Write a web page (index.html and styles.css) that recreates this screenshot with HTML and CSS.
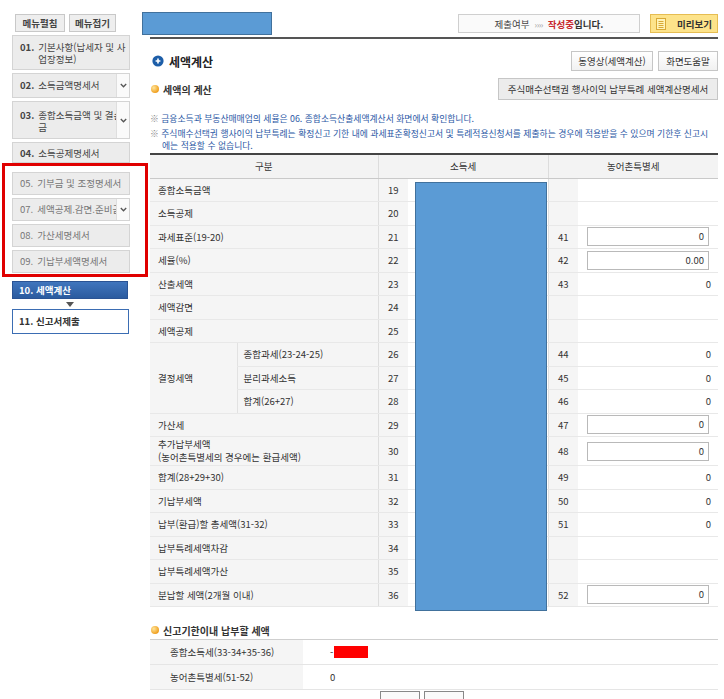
FILE: index.html
```html
<!DOCTYPE html>
<html lang="ko">
<head>
<meta charset="utf-8">
<title>세액계산</title>
<link rel="stylesheet" href="styles.css">
</head>
<body>
<div class="page">
  <aside class="sidebar">
    <div class="side-btns">
      <span class="side-btn w50">메뉴펼침</span>
      <span class="side-btn w47">메뉴접기</span>
    </div>
    <ul class="menu">
      <li class="item two"><b class="num">01.</b><span class="txt">기본사항(납세자 및 사업장정보)</span></li>
      <li class="item one has-chev"><b class="num">02.</b><span class="txt">소득금액명세서</span><span class="chev"><svg width="7" height="5" viewBox="0 0 7 5"><path d="M0.8 1 L3.5 3.8 L6.2 1" fill="none" stroke="#555" stroke-width="1.3"/></svg></span></li>
      <li class="item two tall has-chev"><b class="num">03.</b><span class="txt">종합소득금액 및 결손금</span><span class="chev"><svg width="7" height="5" viewBox="0 0 7 5"><path d="M0.8 1 L3.5 3.8 L6.2 1" fill="none" stroke="#555" stroke-width="1.3"/></svg></span></li>
      <li class="item one last short"><b class="num">04.</b><span class="txt">소득공제명세서</span></li>
    </ul>
    <ul class="menu group">
      <li class="item one dim"><span class="num">05.</span><span class="txt">기부금 및 조정명세서</span></li>
      <li class="item one dim has-chev"><span class="num">07.</span><span class="txt">세액공제.감면.준비금</span><span class="chev"><svg width="7" height="5" viewBox="0 0 7 5"><path d="M0.8 1 L3.5 3.8 L6.2 1" fill="none" stroke="#555" stroke-width="1.3"/></svg></span></li>
      <li class="item one dim"><span class="num">08.</span><span class="txt">가산세명세서</span></li>
      <li class="item one dim last"><span class="num">09.</span><span class="txt">기납부세액명세서</span></li>
    </ul>
    <div class="step-current">10. 세액계산</div>
    <div class="step-arrow"></div>
    <div class="step-next">11. 신고서제출</div>
  </aside>

  <main class="main">
    <div class="topbar">
      <div class="redact-blue"></div>
      <div class="status">
        <span class="st-label">제출여부</span>
        <span class="st-arrows">››››</span>
        <span class="st-red">작성중</span><span class="st-strong">입니다.</span>
      </div>
      <div class="preview">
        <svg class="pv-icon" width="10" height="12" viewBox="0 0 10 12"><rect x="0.5" y="0.5" width="9" height="11" fill="#fff3b8" stroke="#d9a936"/><path d="M2.5 3.5h5M2.5 5.5h5M2.5 7.5h5M2.5 9.5h5" stroke="#d9a936" stroke-width="1"/></svg>
        <span>미리보기</span>
      </div>
    </div>

    <div class="content">
      <div class="title-row">
        <svg class="title-icon" width="12" height="12" viewBox="0 0 12 12"><circle cx="6" cy="6" r="5.6" fill="#1d5ea8"/><path d="M6 3.6v4.8M3.6 6h4.8" stroke="#fff" stroke-width="1.6"/></svg>
        <h1 class="title">세액계산</h1>
        <div class="btns">
          <span class="btn w82">동영상(세액계산)</span>
          <span class="btn w60">화면도움말</span>
        </div>
      </div>

      <div class="sub-row">
        <span class="dot"></span>
        <h2 class="subtitle">세액의 계산</h2>
        <span class="btn gray w220">주식매수선택권 행사이익 납부특례 세액계산명세서</span>
      </div>

      <p class="note n1"><span class="mark">※</span> 금융소득과 부동산매매업의 세율은 06. 종합소득산출세액계산서 화면에서 확인합니다.</p>
      <p class="note n2"><span class="mark">※</span> 주식매수선택권 행사이익 납부특례는 확정신고 기한 내에 과세표준확정신고서 및 특례적용신청서를 제출하는 경우에 적용받을 수 있으며 기한후 신고시<br>에는 적용할 수 없습니다.</p>

      <div class="table-wrap">
        <table class="calc">
          <colgroup>
            <col class="c1"><col class="c2"><col class="c3"><col class="c4"><col class="c5"><col class="c6">
          </colgroup>
          <thead>
            <tr><th colspan="2">구분</th><th colspan="2" class="hsep">소득세</th><th colspan="2" class="hsep">농어촌특별세</th></tr>
          </thead>
          <tbody>
            <tr><th colspan="2" class="lbl">종합소득금액</th><td class="no">19</td><td class="val"></td><td class="no"></td><td class="val"></td></tr>
            <tr><th colspan="2" class="lbl">소득공제</th><td class="no">20</td><td class="val"></td><td class="no"></td><td class="val"></td></tr>
            <tr><th colspan="2" class="lbl">과세표준(19-20)</th><td class="no">21</td><td class="val"></td><td class="no">41</td><td class="val"><div class="inp">0</div></td></tr>
            <tr><th colspan="2" class="lbl">세율(%)</th><td class="no">22</td><td class="val"></td><td class="no">42</td><td class="val"><div class="inp">0.00</div></td></tr>
            <tr><th colspan="2" class="lbl">산출세액</th><td class="no">23</td><td class="val"></td><td class="no">43</td><td class="val num">0</td></tr>
            <tr><th colspan="2" class="lbl">세액감면</th><td class="no">24</td><td class="val"></td><td class="no"></td><td class="val"></td></tr>
            <tr><th colspan="2" class="lbl">세액공제</th><td class="no">25</td><td class="val"></td><td class="no"></td><td class="val"></td></tr>
            <tr><th rowspan="3" class="lbl main">결정세액</th><th class="lbl sub">종합과세(23-24-25)</th><td class="no">26</td><td class="val"></td><td class="no">44</td><td class="val num">0</td></tr>
            <tr><th class="lbl sub">분리과세소득</th><td class="no">27</td><td class="val"></td><td class="no">45</td><td class="val num">0</td></tr>
            <tr><th class="lbl sub">합계(26+27)</th><td class="no">28</td><td class="val"></td><td class="no">46</td><td class="val num">0</td></tr>
            <tr><th colspan="2" class="lbl">가산세</th><td class="no">29</td><td class="val"></td><td class="no">47</td><td class="val"><div class="inp">0</div></td></tr>
            <tr class="double"><th colspan="2" class="lbl">추가납부세액<br>(농어촌특별세의 경우에는 환급세액)</th><td class="no">30</td><td class="val"></td><td class="no">48</td><td class="val"><div class="inp">0</div></td></tr>
            <tr><th colspan="2" class="lbl">합계(28+29+30)</th><td class="no">31</td><td class="val"></td><td class="no">49</td><td class="val num">0</td></tr>
            <tr><th colspan="2" class="lbl">기납부세액</th><td class="no">32</td><td class="val"></td><td class="no">50</td><td class="val num">0</td></tr>
            <tr><th colspan="2" class="lbl">납부(환급)할 총세액(31-32)</th><td class="no">33</td><td class="val"></td><td class="no">51</td><td class="val num">0</td></tr>
            <tr><th colspan="2" class="lbl">납부특례세액차감</th><td class="no">34</td><td class="val"></td><td class="no"></td><td class="val"></td></tr>
            <tr><th colspan="2" class="lbl">납부특례세액가산</th><td class="no">35</td><td class="val"></td><td class="no"></td><td class="val"></td></tr>
            <tr><th colspan="2" class="lbl">분납할 세액(2개월 이내)</th><td class="no">36</td><td class="val"></td><td class="no">52</td><td class="val"><div class="inp">0</div></td></tr>
          </tbody>
        </table>
        <div class="redact-col"></div>
      </div>

      <div class="sub-row sec2">
        <span class="dot"></span>
        <h2 class="subtitle">신고기한이내 납부할 세액</h2>
      </div>
      <table class="due">
        <tr><th>종합소득세(33-34+35-36)</th><td>-<span class="redact-red"></span></td></tr>
        <tr><th>농어촌특별세(51-52)</th><td>0</td></tr>
      </table>
      <div class="foot-btns"><span class="foot-btn"></span><span class="foot-btn"></span></div>
    </div>
  </main>
</div>
</body>
</html>
```
FILE: styles.css
```css
* { box-sizing: border-box; }
html, body { margin: 0; padding: 0; }
body {
  font-family: "Noto Sans CJK KR", "Noto Sans", sans-serif;
  font-size: 9.5px;
  color: #333;
  background: #fff;
}
.page { display: flex; width: 724px; height: 699px; overflow: hidden; }

/* ---------- sidebar ---------- */
.sidebar { flex: 0 0 142px; width: 142px; padding: 14px 0 0 12px; }
.side-btns { display: flex; gap: 4px; margin-left: 3px; }
.side-btn {
  height: 18px; line-height: 16px; text-align: center;
  border: 1px solid #c8c8c8; background: #eeeeee;
  font-weight: bold; color: #444; font-size: 9.5px;
}
.w50 { width: 50px; }
.w47 { width: 47px; }
.menu { list-style: none; margin: 3px 0 0; padding: 0; width: 118px; }
.item {
  position: relative; display: flex;
  border: 1px solid #d4d4d4; background: #ececec;
  color: #444; line-height: 12px;
  margin-bottom: 3px; overflow: hidden;
}
.item.one { padding: 5px 6px 5px 7px; white-space: nowrap; height: 25px; }
.item.two { padding: 5px 0 4px 7px; height: 35px; }
.item.tall { height: 38px; padding-top: 7px; }
.item.short { height: 21px; padding-top: 4px; }
.item.last { margin-bottom: 0; }
.item .num { flex: 0 0 auto; margin-right: 4px; font-weight: bold; }
.item .txt { flex: 1 1 auto; }
.item.has-chev .txt { margin-right: -14px; }
.item.two.has-chev .txt { margin-right: 2px; }
.item.dim { color: #777; height: 23px; padding-top: 4px; }
.item.dim .num { font-weight: normal; }
.chev {
  position: absolute; right: 0; top: 0; bottom: 0; width: 13px;
  background: #fafafa; border-left: 1px solid #dedede;
  display: flex; align-items: center; justify-content: center;
}
.menu.group {
  width: auto;
  margin: 0 -6px 0 -10px;
  border: 3px solid #e00000;
  padding: 6px 3px 1px 7px;
}
.menu.group .item { width: 118px; }
.step-current {
  margin-top: 4px; width: 116px; height: 18px; line-height: 16px;
  padding-left: 6px; color: #fff; font-weight: bold;
  background: linear-gradient(#4075bd, #2b5b9f);
  border: 1px solid #2a5394;
}
.step-arrow {
  width: 0; height: 0; margin: 3px 0 2px 54px;
  border-top: 5px solid #555; border-left: 4px solid transparent; border-right: 4px solid transparent;
}
.step-next {
  width: 117px; height: 25px; line-height: 23px; padding-left: 6px;
  border: 1px solid #3b6db3; background: #fff; font-weight: bold; color: #333;
}

/* ---------- main ---------- */
.main { flex: 0 0 576px; width: 576px; }
.topbar { display: flex; align-items: center; height: 23px; margin-top: 12px; }
.redact-blue { width: 130px; height: 23px; background: #5b9bd5; border: 1px solid #41719c; }
.status {
  margin-left: auto; width: 182px; height: 19px;
  border: 1px solid #cfcfcf; background: #fafafa;
  display: flex; align-items: center; justify-content: center; gap: 5px;
  color: #444;
}
.st-arrows { color: #999; font-size: 8.5px; letter-spacing: -0.5px; }
.st-red { color: #c8282d; font-weight: bold; margin-right: -5px; }
.st-strong { font-weight: bold; color: #333; }
.preview {
  margin-left: 10px; width: 68px; height: 19px;
  background: #fde38a; border: 1px solid #e6bd52;
  display: flex; align-items: center; gap: 11px; padding-left: 5px;
  font-weight: bold; color: #333;
}
.content { margin: 2px 0 0 8px; width: 568px; border-top: 2px solid #555; }
.title-row { display: flex; align-items: center; height: 22px; margin-top: 11px; }
.title-icon { margin-left: 2px; }
.title { margin: 0 0 0 5px; font-size: 12px; font-weight: bold; color: #222; }
.btns { margin-left: auto; display: flex; gap: 5px; }
.btn {
  display: inline-block; height: 20px; line-height: 18px; text-align: center;
  border: 1px solid #c6c6c6; background: linear-gradient(#ffffff, #f1f1f1);
  color: #333; font-size: 9.5px;
}
.w82 { width: 82px; }
.w60 { width: 60px; }
.btn.gray { background: #ececec; height: 22px; line-height: 20px; margin-left: auto; }
.w220 { width: 220px; }
.sub-row { display: flex; align-items: center; height: 22px; margin-top: 6px; }
.dot {
  width: 8px; height: 8px; border-radius: 50%; margin-left: 1px;
  background: radial-gradient(circle at 35% 35%, #ffe59a, #f0a020 70%, #d98410);
}
.subtitle { margin: 0 0 0 4px; font-size: 10px; font-weight: bold; color: #333; }
.note { margin: 0; color: #2b58a5; font-size: 8.8px; white-space: nowrap; }
.note .mark { color: #888; }
.note.n1 { margin-top: 13px; line-height: 12px; }
.note.n2 { margin-top: 3px; line-height: 12px; padding-left: 12px; text-indent: -12px; }

/* ---------- calc table ---------- */
.table-wrap { position: relative; margin-top: 1px; }
.calc { width: 568px; border-collapse: collapse; table-layout: fixed; border-top: 2px solid #444; }
.c1 { width: 87px; } .c2 { width: 141px; } .c3 { width: 30px; }
.c4 { width: 140px; } .c5 { width: 30px; } .c6 { width: 140px; }
.calc thead th {
  height: 24px; font-weight: normal; background: #f3f3f3; color: #333;
  border-bottom: 1px solid #c9c9c9;
}
.calc thead th.hsep { border-left: 1px solid #dcdcdc; }
.calc tbody tr { height: 23.5px; }
.calc tbody tr.double { height: 29px; }
.calc tbody th, .calc tbody td { border-bottom: 1px solid #e8e8e8; padding: 0; }
.calc .lbl { text-align: left; font-weight: normal; background: #f5f5f5; padding-left: 8px; color: #333; line-height: 12px; }
.calc tr.double .lbl { line-height: 13px; }
.calc .lbl.sub { padding-left: 6px; border-left: 1px solid #e2e2e2; }
.calc .no { text-align: center; background: #f5f5f5; border-left: 1px solid #dedede; color: #333; }
.calc .val { background: #fff; }
.calc .val.num { text-align: right; padding-right: 7px; }
.inp {
  margin: 0 9px; height: 19px; line-height: 17px;
  border: 1px solid #b9b9b9; background: #fff;
  text-align: right; padding-right: 4px;
}
.redact-col {
  position: absolute; left: 265px; top: 29px; width: 132px; height: 429px;
  background: #5b9bd5; border: 1px solid #41719c;
}

/* ---------- due table ---------- */
.sec2 { margin-top: 16px; height: 14px; }
.due { width: 568px; border-collapse: collapse; margin-top: 2px; border-top: 1px solid #cfcfcf; border-bottom: 1px solid #aaa; }
.due tr { height: 25px; }
.due th { width: 153px; text-align: left; font-weight: normal; background: #f5f5f5; padding-left: 20px; border-bottom: 1px solid #e5e5e5; }
.due td { padding-left: 27px; border-bottom: 1px solid #e5e5e5; }
.redact-red { display: inline-block; width: 34px; height: 12px; background: #ff0000; vertical-align: -2px; margin-left: 1px; }
.foot-btns { display: flex; gap: 4px; margin: 1px 0 0 230px; }
.foot-btn { width: 40px; height: 16px; border: 1px solid #888; border-bottom: none; background: #fafafa; }
```
